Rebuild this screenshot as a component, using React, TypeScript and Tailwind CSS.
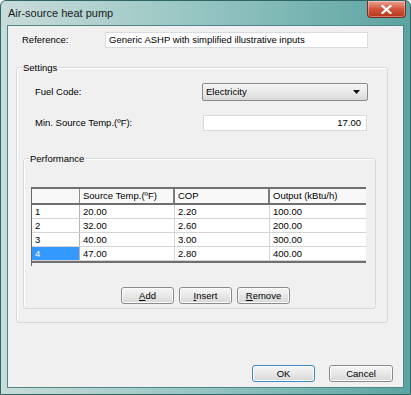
import { ReactNode } from "react";

const rows = [
  { id: "1", temp: "20.00", cop: "2.20", output: "100.00" },
  { id: "2", temp: "32.00", cop: "2.60", output: "200.00" },
  { id: "3", temp: "40.00", cop: "3.00", output: "300.00" },
  { id: "4", temp: "47.00", cop: "2.80", output: "400.00" },
];

const GroupBox = ({ title, className, children }: { title: string; className: string; children: ReactNode }) => (
  <div className={`rounded-[3px] border border-[#d5dadf] shadow-[inset_1px_1px_0_#ffffff] ${className}`}>
    <div className="-mt-[7px] ml-[5px] w-fit bg-[#f0f0f0] px-[1px] leading-[13px]">{title}</div>
    {children}
  </div>
);

const Button = ({ label, mnemonic, rest, isDefault }: { label?: string; mnemonic?: string; rest?: string; isDefault?: boolean }) => (
  <div
    className={`flex h-[17px] items-center justify-center rounded-[3px] border bg-gradient-to-b from-[#f6f6f6] via-[#e8e8e8] to-[#d6d6d6] leading-none shadow-[inset_0_0_0_1px_#fcfcfc] ${
      isDefault ? "w-[63px] border-[#3c8bbf]" : "border-[#8a8a8a]"
    }`}
  >
    {label ?? (
      <span>
        <span className="underline">{mnemonic}</span>
        {rest}
      </span>
    )}
  </div>
);

export default function App() {
  return (
    <div className="font-['Liberation_Sans',Arial,sans-serif] text-[9.5px] text-black">
      <div className="flex h-[395px] w-[411px] flex-col rounded-t-[6px] border border-[#2f6565] bg-gradient-to-r from-[#c8dcda] via-[#94c4c1] to-[#5aa4a1]">
        <div className="flex h-[24px] items-start justify-between">
          <span className="ml-[7px] mt-[5px] text-[11px] leading-[14px] text-[#1a1a1a]">Air-source heat pump</span>
          <div className="mr-[4px] flex h-[17px] w-[39px] items-center justify-center rounded-b-[4px] border border-t-0 border-[#7a2a1c] bg-gradient-to-b from-[#e9a394] via-[#d2543c] to-[#b8341c] shadow-[inset_0_0_0_1px_rgba(255,255,255,0.35)]">
            <svg width="11" height="9" viewBox="0 0 11 9">
              <path d="M1.5 1 L9.5 8 M9.5 1 L1.5 8" stroke="#ffffff" strokeWidth="2.2" strokeLinecap="square" />
            </svg>
          </div>
        </div>
        <div className="mx-[6px] mb-[6px] flex flex-1 flex-col border border-[#4f8585] bg-[#f0f0f0]">
          <div className="mt-[6px] flex items-center pl-[14px]">
            <span className="w-[83px]">Reference:</span>
            <div className="flex h-[16px] w-[263px] items-center border border-[#d7dbe0] bg-white pl-[3px]">
              Generic ASHP with simplified illustrative inputs
            </div>
          </div>

          <GroupBox title="Settings" className="ml-[8px] mt-[19px] w-[372px] pb-[13px]">
            <div className="mt-[9px] flex items-center pl-[18px]">
              <span className="w-[167px]">Fuel Code:</span>
              <div className="flex h-[18px] w-[166px] items-center justify-between rounded-[2px] border border-[#8a8a8a] bg-gradient-to-b from-[#f4f4f4] via-[#eaeaea] to-[#d9d9d9] pl-[3px] pr-[7px]">
                <span>Electricity</span>
                <svg width="7" height="4" viewBox="0 0 7 4">
                  <path d="M0 0 H7 L3.5 4 Z" fill="#111111" />
                </svg>
              </div>
            </div>
            <div className="mt-[14px] flex items-center pl-[18px]">
              <span className="w-[168px]">Min. Source Temp.(ºF):</span>
              <div className="flex h-[16px] w-[164px] items-center justify-end border border-[#d7dbe0] bg-white pr-[5px]">17.00</div>
            </div>

            <GroupBox title="Performance" className="ml-[6px] mt-[27px] w-[353px] pb-[4px]">
              <div className="ml-[7px] mt-[22px] w-[335px] border-l border-[#6a6a6a] bg-[#f0f0f0]">
                <div className="grid grid-cols-[48px_95px_95px_1fr] border-y-2 border-[#6f6f6f] bg-[#f8f8f8]">
                  <div className="h-[14px] border-r border-[#8c8c8c]" />
                  <div className="h-[14px] border-r-2 border-[#7c7c7c] pl-[3px] leading-[14px]">Source Temp.(ºF)</div>
                  <div className="h-[14px] border-r-2 border-[#7c7c7c] pl-[3px] leading-[14px]">COP</div>
                  <div className="h-[14px] pl-[3px] leading-[14px]">Output (kBtu/h)</div>
                </div>
                {rows.map((row, i) => (
                  <div key={row.id} className="grid h-[14px] grid-cols-[48px_95px_95px_1fr] border-b border-[#d4d4d4] bg-white leading-[13px]">
                    <div className={`border-r border-[#b5b5b5] pl-[3px] ${i === 3 ? "bg-[#3399ff] text-white" : ""}`}>{row.id}</div>
                    <div className="border-r border-[#d4d4d4] pl-[3px]">{row.temp}</div>
                    <div className="border-r border-[#d4d4d4] pl-[3px]">{row.cop}</div>
                    <div className="pl-[3px]">{row.output}</div>
                  </div>
                ))}
                <div className="h-[2px] bg-[#6f6f6f]" />
                <div className="h-[3px]" />
              </div>

              <div className="ml-[97px] mt-[21px] flex gap-[5px]">
                <div className="w-[53px]"><Button mnemonic="A" rest="dd" /></div>
                <div className="w-[53px]"><Button mnemonic="I" rest="nsert" /></div>
                <div className="w-[53px]"><Button mnemonic="R" rest="emove" /></div>
              </div>
            </GroupBox>
          </GroupBox>

          <div className="mt-[42px] flex justify-end gap-[14px] pr-[10px]">
            <Button label="OK" isDefault />
            <div className="w-[64px]"><Button label="Cancel" /></div>
          </div>
        </div>
      </div>
    </div>
  );
}
